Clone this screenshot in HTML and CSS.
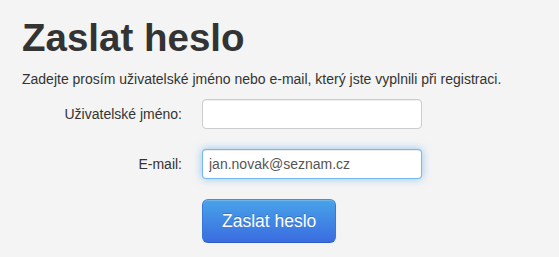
FILE: index.html
```html
<!DOCTYPE html>
<html lang="cs">
<head>
<meta charset="utf-8">
<title>Zaslat heslo</title>
<link rel="stylesheet" href="styles.css">
</head>
<body>
<div class="container">
  <h1 class="title">Zaslat heslo</h1>
  <p class="intro">Zadejte prosím uživatelské jméno nebo e-mail, který jste vyplnili při registraci.</p>
  <form class="form">
    <div class="group">
      <label class="label" for="user">Uživatelské jméno:</label>
      <div class="controls"><input class="input" id="user" type="text"></div>
    </div>
    <div class="group">
      <label class="label" for="mail">E-mail:</label>
      <div class="controls"><input class="input input-focus" id="mail" type="text" value="jan.novak@seznam.cz"></div>
    </div>
    <div class="actions">
      <button class="btn" type="button">Zaslat heslo</button>
    </div>
  </form>
</div>
</body>
</html>
```
FILE: styles.css
```css
* { box-sizing: border-box; }
html, body { margin: 0; padding: 0; }
body {
  background: #f4f4f4;
  font-family: "Liberation Sans", Arial, sans-serif;
  font-size: 14px;
  line-height: 20px;
  color: #333;
}
.container { padding: 8px 22px 0; }
.title {
  margin: 10px 0 11px;
  font-size: 38.5px;
  line-height: 40px;
  font-weight: bold;
  color: #333;
}
.intro { margin: 0 0 10px; }
.form { margin: 0; }
.group { display: flex; margin-bottom: 20px; }
.label {
  width: 160px;
  padding-top: 5px;
  text-align: right;
  margin-right: 20px;
}
.input {
  display: block;
  width: 220px;
  height: 30px;
  padding: 4px 6px;
  font-family: "Liberation Sans", Arial, sans-serif;
  font-size: 14px;
  line-height: 20px;
  color: #555;
  background: #fff;
  border: 1px solid #ccc;
  border-radius: 4px;
  box-shadow: inset 0 1px 1px rgba(0,0,0,0.075);
  outline: none;
  margin: 0;
}
.input-focus {
  border-color: rgba(82,168,236,0.8);
  box-shadow: inset 0 1px 1px rgba(0,0,0,0.075), 0 0 8px rgba(82,168,236,0.6);
}
.actions { padding-left: 180px; }
.btn {
  display: inline-block;
  padding: 11px 19px;
  font-family: "Liberation Sans", Arial, sans-serif;
  font-size: 17.5px;
  line-height: 20px;
  color: #fff;
  background: linear-gradient(to bottom, #48a3e9, #3a6ce0);
  border: 1px solid rgba(0,0,0,0.1);
  border-color: #3f8fdc #3a78d8 #2f5cc4;
  border-radius: 6px;
  box-shadow: inset 0 1px 0 rgba(255,255,255,0.2), 0 1px 2px rgba(0,0,0,0.05);
  text-shadow: 0 -1px 0 rgba(0,0,0,0.2);
  cursor: pointer;
  margin: 0;
}
```
